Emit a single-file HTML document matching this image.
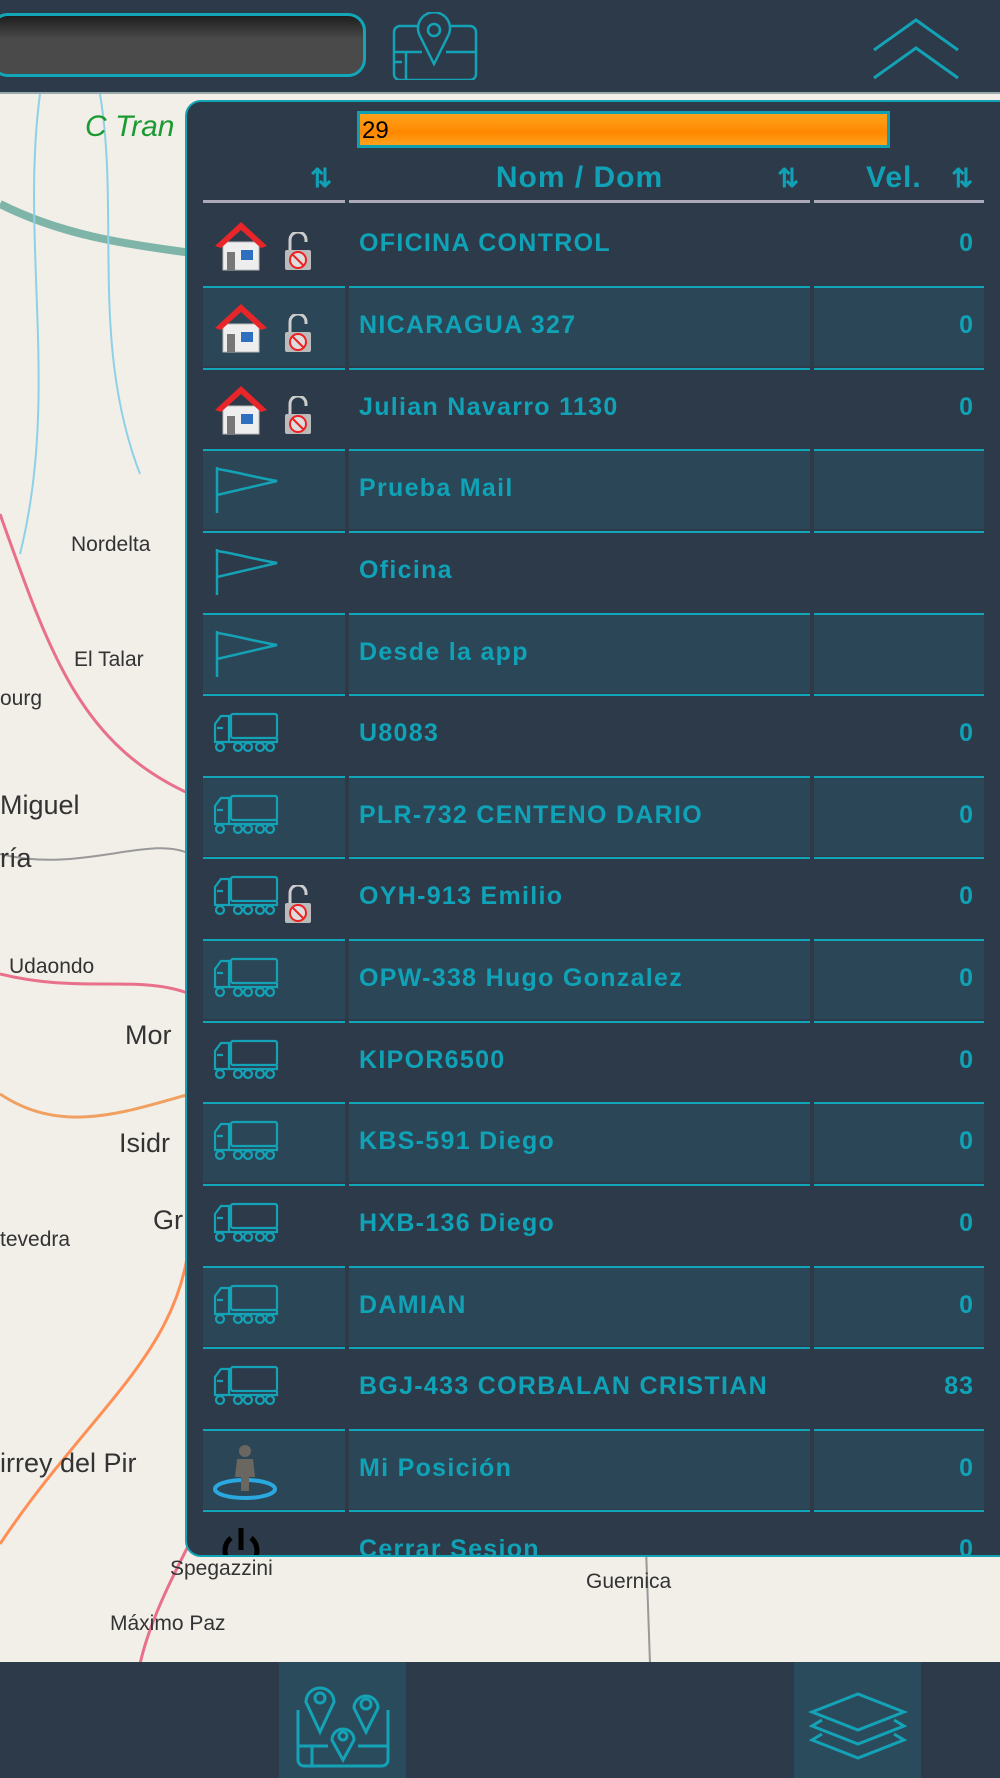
<!DOCTYPE html>
<html><head><meta charset="utf-8"><style>
*{margin:0;padding:0;box-sizing:border-box}
body{width:1000px;height:1778px;overflow:hidden;position:relative;background:#f2efe9;font-family:"Liberation Sans",Arial,sans-serif}
.lbl{position:absolute;color:#333;font-size:21px;white-space:nowrap}
#hdr{position:absolute;left:0;top:0;width:1000px;height:94px;background:#2c3a4a;border-bottom:2px solid #9aa}
#search{position:absolute;left:-10px;top:13px;width:376px;height:64px;border:3px solid #12a7b8;border-radius:18px;background:linear-gradient(#1e1e1e,#4a4a4a 40%,#4a4a4a)}
#panel{position:absolute;left:185px;top:100px;width:830px;height:1457px;background:#2c3a4a;border:2px solid #13a3b6;border-radius:16px 0 0 16px;overflow:hidden}
#bar{position:absolute;left:170px;top:9px;width:533px;height:37px;border:3px solid #0f9fb3;background:linear-gradient(#ffa21c,#ff8800 60%,#ffa21c)}
#bar span{position:absolute;left:2px;top:3px;font-size:24px;color:#000}
.hc{position:absolute;top:59px;height:42px;border-bottom:3px solid #aab;color:#10a1b6;font-weight:bold;font-size:30px;letter-spacing:1px}
.row{position:absolute;left:16px;width:790px;height:82px}
.cell{position:absolute;top:0;height:80px;border-top:2px solid #10a5b8}
.c1{left:0;width:142px}.c2{left:146px;width:461px}.c3{left:611px;width:170px}
.lt .cell{background:#2b4656}
.t{position:absolute;left:10px;top:23px;color:#10a2b6;font-weight:bold;font-size:25px;letter-spacing:1.3px;white-space:nowrap}
.v{position:absolute;right:10px;top:23px;color:#10a2b6;font-weight:bold;font-size:25px;letter-spacing:1px}
.ic{position:absolute;left:10px;top:14px}
#bot{position:absolute;left:0;top:1662px;width:1000px;height:116px;background:#2c3a4a}
</style></head><body>
<svg style="position:absolute;left:0;top:94px" width="1000" height="1570">
<g fill="none" stroke-width="3">
<path d="M0 110 C60 140 120 150 200 160" stroke="#7fb5a8" stroke-width="8"/>
<path d="M0 420 C50 560 80 650 190 700" stroke="#e8708a"/>
<path d="M40 0 C20 150 60 300 20 460" stroke="#8fd0e8" stroke-width="2"/>
<path d="M100 0 C120 120 90 250 140 380" stroke="#8fd0e8" stroke-width="2"/>
<path d="M0 880 C80 900 140 880 190 900" stroke="#e8708a"/>
<path d="M0 1000 C60 1040 120 1020 190 1000" stroke="#f0a060"/>
<path d="M0 1450 C100 1300 200 1250 190 1100" stroke="#ff9055"/>
<path d="M260 1280 C240 1380 160 1480 140 1570" stroke="#e8708a"/>
<path d="M600 1300 C630 1400 700 1450 760 1460" stroke="#e8708a"/>
<path d="M640 1280 L650 1570" stroke="#999" stroke-width="2"/>
<path d="M820 1350 L1000 1300" stroke="#c9a" stroke-width="2" stroke-dasharray="10 5"/>
<path d="M0 760 C80 780 150 740 190 760" stroke="#999" stroke-width="2"/>
</g>
</svg>
<div class="lbl" style="left:85px;top:110px;color:#1a9a30;font-style:italic;font-size:30px">C Tran</div>
<div class="lbl" style="left:71px;top:533px">Nordelta</div>
<div class="lbl" style="left:74px;top:648px">El Talar</div>
<div class="lbl" style="left:0;top:687px">ourg</div>
<div class="lbl" style="left:0;top:790px;font-size:27px">Miguel</div>
<div class="lbl" style="left:0;top:843px;font-size:27px">ría</div>
<div class="lbl" style="left:9px;top:955px">Udaondo</div>
<div class="lbl" style="left:125px;top:1020px;font-size:27px">Mor</div>
<div class="lbl" style="left:119px;top:1128px;font-size:27px">Isidr</div>
<div class="lbl" style="left:153px;top:1205px;font-size:27px">Gr</div>
<div class="lbl" style="left:0;top:1228px">tevedra</div>
<div class="lbl" style="left:0;top:1448px;font-size:27px">irrey del Pir</div>
<div class="lbl" style="left:170px;top:1557px">Spegazzini</div>
<div class="lbl" style="left:110px;top:1612px">Máximo Paz</div>
<div class="lbl" style="left:586px;top:1570px">Guernica</div>

<div id="hdr">
<div id="search"></div>
<svg style="position:absolute;left:392px;top:12px" width="86" height="68" viewBox="0 0 86 68" fill="none" stroke="#14a3b6" stroke-width="2.5">
<path d="M26 14 H8 a6 6 0 0 0-6 6 V62 a6 6 0 0 0 6 6 H78 a6 6 0 0 0 6-6 V20 a6 6 0 0 0-6-6 H58"/>
<path d="M2 40 H30 M14 40 V68 M54 40 H84 M2 50 H10"/>
<path d="M42 52 L28 24 A16 16 0 1 1 56 24 Z"/><circle cx="42" cy="18" r="6"/>
</svg>
<svg style="position:absolute;left:872px;top:18px" width="88" height="62" viewBox="0 0 88 62" fill="none" stroke="#14a3b6" stroke-width="3">
<path d="M2 32 L44 2 L86 32 M2 60 L44 30 L86 60"/></svg>
</div>

<div id="panel">
<div id="bar"><span>29</span></div>
<div class="hc" style="left:16px;width:142px"><span style="position:absolute;right:12px;top:2px;font-size:26px">⇅</span></div>
<div class="hc" style="left:162px;width:461px;text-align:center"><span>Nom / Dom</span><span style="position:absolute;right:10px;top:2px;font-size:26px">⇅</span></div>
<div class="hc" style="left:627px;width:170px"><span style="position:absolute;left:52px;top:0">Vel.</span><span style="position:absolute;right:10px;top:2px;font-size:26px">⇅</span></div>
<div id="rows"></div>
</div>

<div id="bot">
<div style="position:absolute;left:279px;top:0;width:127px;height:116px;background:#2a4b5c"></div>
<div style="position:absolute;left:794px;top:0;width:127px;height:116px;background:#2a4b5c"></div>
<svg style="position:absolute;left:290px;top:18px" width="106" height="90" viewBox="0 0 106 90" fill="none" stroke="#14a3b6" stroke-width="3">
<path d="M8 30 V80 a6 6 0 0 0 6 6 H92 a6 6 0 0 0 6-6 V30"/>
<path d="M30 52 L16 22 A14 14 0 1 1 44 22 Z"/><circle cx="30" cy="18" r="5"/>
<path d="M76 52 L64 28 A12 12 0 1 1 88 28 Z"/><circle cx="76" cy="24" r="5"/>
<path d="M53 80 L42 60 A11 11 0 1 1 64 60 Z"/><circle cx="53" cy="56" r="4"/>
<path d="M8 66 H38 M22 66 V86 M68 66 H98"/></svg>
<svg style="position:absolute;left:802px;top:30px" width="112" height="70" viewBox="0 0 112 70" fill="none" stroke="#14a3b6" stroke-width="3">
<path d="M10 20 L56 2 L102 20 L56 38 Z"/><path d="M20 28 L10 34 L56 52 L102 34 L92 28"/><path d="M20 42 L10 48 L56 66 L102 48 L92 42"/></svg>
</div>

<script>
var house='<svg width="56" height="52" viewBox="0 0 56 52"><rect x="10" y="22" width="36" height="28" fill="#eee" stroke="#bbb"/><path d="M2 26 L28 2 L54 26 L48 28 L28 10 L8 28 Z" fill="#e8262a"/><rect x="14" y="32" width="8" height="18" fill="#777"/><rect x="28" y="30" width="12" height="10" fill="#2f6fc0"/></svg>';
var lock='<svg width="30" height="40" viewBox="0 0 30 40" style="position:absolute;left:70px;top:12px"><path d="M7 18 V8 a8 8 0 0 1 16 0 V10" fill="none" stroke="#ccc" stroke-width="3"/><rect x="2" y="18" width="26" height="20" fill="#bbb" rx="2"/><circle cx="15" cy="28" r="8" fill="#ddd" stroke="#e22" stroke-width="2"/><path d="M9 22 L21 34" stroke="#e22" stroke-width="2"/></svg>';
var flag='<svg width="70" height="50" viewBox="0 0 70 50" fill="none" stroke="#14a3b6" stroke-width="2.5"><path d="M4 2 V48 M4 4 C20 6 40 12 64 16 L4 30"/></svg>';
var truck='<svg width="66" height="44" viewBox="0 0 66 44" fill="none" stroke="#14a3b6" stroke-width="2.2"><path d="M2 32 V14 L8 6 H16 V32 Z M4 18 H10"/><rect x="18" y="4" width="46" height="24" rx="2"/><path d="M16 32 H64 V28"/><circle cx="7" cy="37" r="4"/><circle cx="25" cy="37" r="4"/><circle cx="35" cy="37" r="4"/><circle cx="47" cy="37" r="4"/><circle cx="57" cy="37" r="4"/></svg>';
var person='<svg width="70" height="56" viewBox="0 0 70 56"><ellipse cx="32" cy="44" rx="30" ry="9" fill="none" stroke="#2aa8e0" stroke-width="4"/><circle cx="32" cy="6" r="6" fill="#6a6660"/><path d="M24 14 H40 L42 32 H36 V46 H28 V32 H22 Z" fill="#6a6660"/></svg>';
var power='<svg width="56" height="56" viewBox="0 0 56 56" fill="none" stroke="#000" stroke-width="5"><path d="M18 16 A16 16 0 1 0 38 16 M28 6 V28"/></svg>';
var R=[['OFICINA CONTROL','0','h'],['NICARAGUA 327','0','h'],['Julian Navarro 1130','0','h'],['Prueba Mail','','f'],['Oficina','','f'],['Desde la app','','f'],['U8083','0','t'],['PLR-732 CENTENO DARIO','0','t'],['OYH-913 Emilio','0','tl'],['OPW-338 Hugo Gonzalez','0','t'],['KIPOR6500','0','t'],['KBS-591 Diego','0','t'],['HXB-136 Diego','0','t'],['DAMIAN','0','t'],['BGJ-433 CORBALAN CRISTIAN','83','t'],['Mi Posición','0','p'],['Cerrar Sesion','0','x']];
var h='';
R.forEach(function(r,i){
 var top=i==0?102:184+81.63*(i-1);
 var ic=r[2]=='h'?house+lock:r[2]=='f'?flag:r[2]=='t'?truck:r[2]=='tl'?truck+lock:r[2]=='p'?person:power;
 var icTop=r[2]=='x'?10:14;
 var bt=i==0?'border-top-color:transparent':'';
 h+='<div class="row'+(i%2?' lt':'')+'" style="top:'+top+'px"><div class="cell c1" style="'+bt+'"><div class="ic" style="top:'+icTop+'px">'+ic+'</div></div><div class="cell c2" style="'+bt+'"><div class="t">'+r[0]+'</div></div><div class="cell c3" style="'+bt+'"><div class="v">'+r[1]+'</div></div></div>';
});
document.getElementById('rows').innerHTML=h;
</script>
</body></html>
